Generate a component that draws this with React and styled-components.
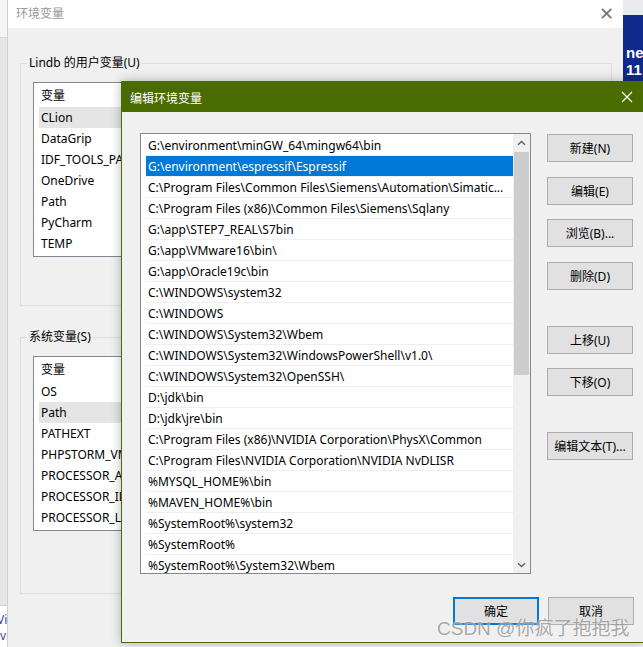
import React from "react";
import styled, { createGlobalStyle } from "styled-components";

const GlobalStyle = createGlobalStyle`
  html, body {
    margin: 0;
    padding: 0;
    background: #f0f0f0;
  }
  * {
    box-sizing: border-box;
  }
`;

const UI_FONT = `"Noto Sans", "Noto Sans CJK SC", sans-serif`;

const Screen = styled.div`
  position: relative;
  width: 643px;
  height: 647px;
  overflow: hidden;
  display: flex;
  font-family: ${UI_FONT};
  font-size: 12px;
  color: #000;
`;

const LeftStrip = styled.div`
  width: 7px;
  display: flex;
  flex-direction: column;
  background: #e6e6e6;
`;

const StripTop = styled.div`
  height: 38px;
  background: #f5f5f5;
  border-bottom: 1px solid #d6d6d6;
`;

const StripFill = styled.div`
  flex: 1;
`;

const StripDesk = styled.div`
  height: 42px;
  background: #fff;
  border-top: 1px solid #cfcfcf;
  color: #3a4a9c;
  font-size: 12px;
  line-height: 16px;
  overflow: hidden;
  padding-top: 6px;
  text-indent: -3px;
`;

const BgWindow = styled.div`
  flex: 1;
  display: flex;
  flex-direction: column;
  border-left: 1px solid #cfcfcf;
  background: #f0f0f0;
`;

const BgTitleBar = styled.div`
  height: 28px;
  background: #fff;
  display: flex;
  align-items: center;
  justify-content: space-between;
  padding: 0 8px 4px 8px;
  color: #999;
  font-family: "Noto Sans CJK SC", sans-serif;
`;

const GrayClose = styled.span`
  font-size: 18px;
  font-weight: 300;
  color: #777;
  margin-right: 1px;
`;

const BgBody = styled.div`
  flex: 1;
  padding: 27px 11px 0 12px;
  display: flex;
  flex-direction: column;
`;

const Group = styled.fieldset`
  margin: 0 0 ${(p) => p.$after || 0}px 0;
  padding: 11px 12px 0 12px;
  height: ${(p) => p.$height}px;
  border: 1px solid #dcdcdc;
  min-width: 0;
`;

const Legend = styled.legend`
  margin-left: -6px;
  padding: 0 2px;
  line-height: 16px;
  font-family: ${UI_FONT};
`;

/* only the part left of the edit dialog is ever visible */
const VarList = styled.div`
  width: 89px;
  height: ${(p) => p.$height}px;
  background: #fff;
  border: 1px solid #828790;
  overflow: hidden;
`;

const VarHeader = styled.div`
  height: 24px;
  line-height: 24px;
  padding-left: 7px;
  font-family: "Noto Sans CJK SC", sans-serif;
`;

const VarRow = styled.div`
  height: 21px;
  line-height: 21px;
  margin-left: 5px;
  padding-left: 2px;
  background: ${(p) => (p.$active ? "#e5e5e5" : "transparent")};
  white-space: nowrap;
  overflow: hidden;
`;

const DesktopApp = styled.div`
  width: 20px;
  display: flex;
  flex-direction: column;
`;

const AppTop = styled.div`
  height: 15px;
  background: #ebebeb;
`;

const AppTile = styled.div`
  height: 66px;
  background: #0f2a8a;
  color: #fff;
  font-family: "Liberation Sans", sans-serif;
  font-weight: bold;
  font-size: 15px;
  line-height: 17px;
  padding-top: 29px;
  padding-left: 3px;
  overflow: hidden;
`;

const Dialog = styled.div`
  position: absolute;
  left: 121px;
  top: 81px;
  width: 524px;
  height: 562px;
  border: 1px solid #4c6b08;
  background: #f0f0f0;
  display: flex;
  flex-direction: column;
  box-shadow: 0 0 10px rgba(0, 0, 0, 0.28);
`;

const TitleBar = styled.div`
  height: 30px;
  background: #4a6b00;
  color: #fff;
  display: flex;
  align-items: center;
  justify-content: space-between;
  padding: 0 9px 0 8px;
  font-family: "Noto Sans CJK SC", sans-serif;
`;

const CloseIcon = styled.svg`
  width: 12px;
  height: 12px;
  margin-right: 2px;
`;

const DialogBody = styled.div`
  flex: 1;
  display: flex;
  flex-direction: column;
  padding: 21px 10px 0 18px;
`;

const MainRow = styled.div`
  display: flex;
  gap: 16px;
`;

const PathList = styled.div`
  width: 391px;
  height: 441px;
  background: #fff;
  border: 1px solid #828790;
  display: flex;
`;

const Rows = styled.div`
  flex: 1;
  min-width: 0;
  overflow: hidden;
  padding: 1px 0 0 5px;
`;

const PathRow = styled.div`
  height: 21px;
  line-height: 22px;
  padding-left: 2px;
  border-bottom: 1px solid #efefef;
  white-space: nowrap;
  overflow: hidden;
  background: ${(p) => (p.$selected ? "#0078d7" : "transparent")};
  color: ${(p) => (p.$selected ? "#fff" : "#000")};
`;

const ScrollBar = styled.div`
  width: 17px;
  background: #f0f0f0;
  display: flex;
  flex-direction: column;
`;

const ScrollArrow = styled.div`
  height: 17px;
  display: flex;
  align-items: center;
  justify-content: center;
`;

const ScrollTrack = styled.div`
  flex: 1;
  padding: 1px 1px 0 1px;
`;

const Thumb = styled.div`
  height: 223px;
  background: #cdcdcd;
`;

const ButtonColumn = styled.div`
  width: 86px;
  display: flex;
  flex-direction: column;
`;

const Button = styled.button`
  width: 86px;
  height: 28px;
  margin-top: ${(p) => p.$top || 0}px;
  background: #e1e1e1;
  border: ${(p) => (p.$default ? "2px solid #0078d7" : "1px solid #adadad")};
  font-family: ${UI_FONT};
  font-size: 12px;
  color: #000;
  padding: 0;
  border-radius: 0;
`;

const Footer = styled.div`
  display: flex;
  justify-content: flex-end;
  gap: 9px;
  margin-top: 23px;
`;

const Watermark = styled.div`
  position: absolute;
  left: 437px;
  top: 617px;
  font-family: "Liberation Sans", "Noto Sans CJK SC", sans-serif;
  font-size: 19px;
  line-height: 24px;
  color: rgba(140, 140, 140, 0.75);
  text-shadow: 0 0 2px rgba(255, 255, 255, 0.9);
  white-space: nowrap;
`;

const userVars = ["CLion", "DataGrip", "IDF_TOOLS_PATH", "OneDrive", "Path", "PyCharm", "TEMP", "TMP"];
const sysVars = [
  "OS",
  "Path",
  "PATHEXT",
  "PHPSTORM_VM_OPTIONS",
  "PROCESSOR_ARCHITECTURE",
  "PROCESSOR_IDENTIFIER",
  "PROCESSOR_LEVEL",
];

const paths = [
  "G:\\environment\\minGW_64\\mingw64\\bin",
  "G:\\environment\\espressif\\Espressif",
  "C:\\Program Files\\Common Files\\Siemens\\Automation\\Simatic...",
  "C:\\Program Files (x86)\\Common Files\\Siemens\\Sqlany",
  "G:\\app\\STEP7_REAL\\S7bin",
  "G:\\app\\VMware16\\bin\\",
  "G:\\app\\Oracle19c\\bin",
  "C:\\WINDOWS\\system32",
  "C:\\WINDOWS",
  "C:\\WINDOWS\\System32\\Wbem",
  "C:\\WINDOWS\\System32\\WindowsPowerShell\\v1.0\\",
  "C:\\WINDOWS\\System32\\OpenSSH\\",
  "D:\\jdk\\bin",
  "D:\\jdk\\jre\\bin",
  "C:\\Program Files (x86)\\NVIDIA Corporation\\PhysX\\Common",
  "C:\\Program Files\\NVIDIA Corporation\\NVIDIA NvDLISR",
  "%MYSQL_HOME%\\bin",
  "%MAVEN_HOME%\\bin",
  "%SystemRoot%\\system32",
  "%SystemRoot%",
  "%SystemRoot%\\System32\\Wbem",
];

const sideButtons = [
  { label: "新建(N)", top: 1 },
  { label: "编辑(E)", top: 15 },
  { label: "浏览(B)...", top: 14 },
  { label: "删除(D)", top: 15 },
  { label: "上移(U)", top: 36 },
  { label: "下移(O)", top: 14 },
  { label: "编辑文本(T)...", top: 36 },
];

function Chevron({ down }) {
  return (
    <svg width="9" height="6" viewBox="0 0 9 6">
      <path
        d={down ? "M1 1.2 L4.5 4.6 L8 1.2" : "M1 4.8 L4.5 1.4 L8 4.8"}
        fill="none"
        stroke="#606060"
        strokeWidth="1.4"
      />
    </svg>
  );
}

export default function App() {
  return (
    <>
      <GlobalStyle />
      <Screen>
        <LeftStrip>
          <StripTop />
          <StripFill />
          <StripDesk>Vi<br />v</StripDesk>
        </LeftStrip>

        <BgWindow>
          <BgTitleBar>
            <span>环境变量</span>
            <GrayClose>✕</GrayClose>
          </BgTitleBar>
          <BgBody>
            <Group $height={251} $after={23}>
              <Legend>Lindb 的用户变量(U)</Legend>
              <VarList $height={175}>
                <VarHeader>变量</VarHeader>
                {userVars.map((v, i) => (
                  <VarRow key={v} $active={i === 0}>{v}</VarRow>
                ))}
              </VarList>
            </Group>
            <Group $height={265}>
              <Legend>系统变量(S)</Legend>
              <VarList $height={175}>
                <VarHeader>变量</VarHeader>
                {sysVars.map((v) => (
                  <VarRow key={v} $active={v === "Path"}>{v}</VarRow>
                ))}
              </VarList>
            </Group>
          </BgBody>
        </BgWindow>

        <DesktopApp>
          <AppTop />
          <AppTile>
            ne
            <br />
            11
          </AppTile>
        </DesktopApp>

        <Dialog>
          <TitleBar>
            <span>编辑环境变量</span>
            <CloseIcon viewBox="0 0 12 12">
              <path d="M1 1 L11 11 M11 1 L1 11" stroke="#fff" strokeWidth="1.2" />
            </CloseIcon>
          </TitleBar>
          <DialogBody>
            <MainRow>
              <PathList>
                <Rows>
                  {paths.map((p, i) => (
                    <PathRow key={p} $selected={i === 1}>{p}</PathRow>
                  ))}
                </Rows>
                <ScrollBar>
                  <ScrollArrow>
                    <Chevron />
                  </ScrollArrow>
                  <ScrollTrack>
                    <Thumb />
                  </ScrollTrack>
                  <ScrollArrow>
                    <Chevron down />
                  </ScrollArrow>
                </ScrollBar>
              </PathList>
              <ButtonColumn>
                {sideButtons.map((b) => (
                  <Button key={b.label} $top={b.top}>{b.label}</Button>
                ))}
              </ButtonColumn>
            </MainRow>
            <Footer>
              <Button $default>确定</Button>
              <Button>取消</Button>
            </Footer>
          </DialogBody>
        </Dialog>

        <Watermark>CSDN @你疯了抱抱我</Watermark>
      </Screen>
    </>
  );
}
